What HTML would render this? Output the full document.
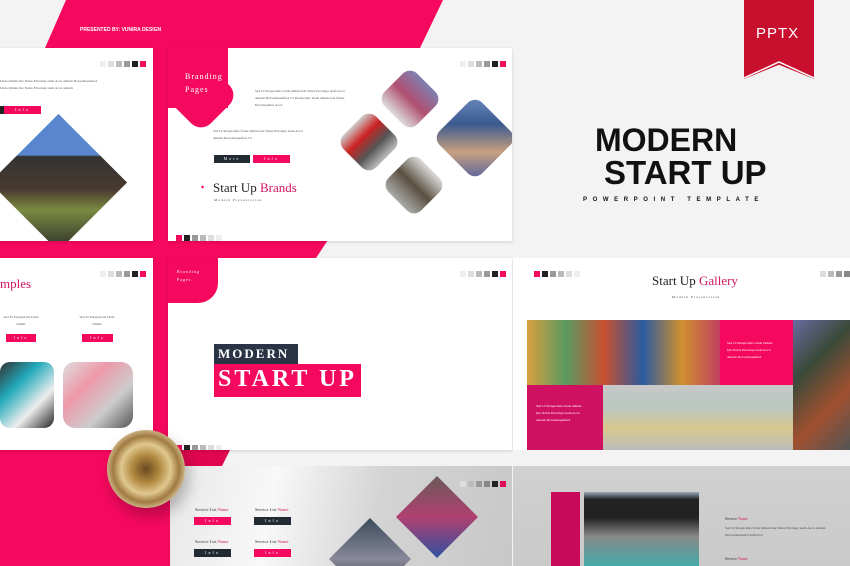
<!DOCTYPE html>
<html><head><meta charset="utf-8"><style>
*{margin:0;padding:0;box-sizing:border-box}
html,body{width:850px;height:566px;overflow:hidden}
body{background:#f3f3f3;font-family:"Liberation Serif",serif}
#w{position:relative;width:850px;height:566px;overflow:hidden}
.a{position:absolute}
.pk{background:#f5095e}
.sl{background:#fff;position:absolute;box-shadow:0 1px 3px rgba(0,0,0,.15);overflow:hidden}
.sw{white-space:nowrap}
.sw span{display:inline-block;width:6px;height:6px;margin-right:2px}
.btn{position:absolute;height:8px;font-size:4px;color:#fff;text-align:center;line-height:8px;letter-spacing:2px}
.tx{position:absolute;font-size:3.5px;color:#555;line-height:7px;white-space:nowrap}
.dia{position:absolute;transform:rotate(45deg);border-radius:10px;overflow:hidden}
</style></head><body><div id="w">
<svg class="a" style="left:0;top:0;display:block" width="850" height="566">
<polygon points="66,0 443,0 420,48 45,48" fill="#f5095e"/>
<polygon points="0,240 328,240 316,258 0,258" fill="#f5095e"/>
<rect x="153" y="40" width="15" height="420" fill="#f5095e"/>
<rect x="0" y="450" width="170" height="116" fill="#f5095e"/>
<polygon points="170,450 230,450 222,466 170,466" fill="#e0064f"/>
</svg>
<div class="a" style="left:80px;top:27px;font:bold 5px 'Liberation Sans',sans-serif;color:#fff">PRESENTED BY: VUNIRA DESIGN</div>

<div class="sl" style="left:0;top:48px;width:153px;height:193px">
<div class="a sw" style="left:100px;top:6px"><span style="background:#eee"></span><span style="background:#ddd"></span><span style="background:#bbb"></span><span style="background:#999"></span><span style="background:#222"></span><span style="background:#f5095e"></span></div>
<div class="tx" style="left:0;top:30px">Unde Omnis Iste Natus Envolupt atem Accu antium Doloremqueifsol<br>Unde Omnis Iste Natus Envolupt atem Accu antium</div>
<div class="btn" style="left:0;top:58px;width:4px;background:#222"></div>
<div class="btn pk" style="left:4px;top:58px;width:37px">Info</div>
<div class="dia" style="left:10px;top:86px;width:97px;height:97px;border-radius:0;background:linear-gradient(135deg,#5a86d0 0%,#5a86d0 30%,#333 31%,#4a3a30 55%,#7a8a40 70%,#2b2b2b 100%)"></div>
</div>
<div class="sl" style="left:168px;top:48px;width:344px;height:193px">
<div class="a sw" style="left:292px;top:6px"><span style="background:#eee"></span><span style="background:#ddd"></span><span style="background:#bbb"></span><span style="background:#999"></span><span style="background:#222"></span><span style="background:#f5095e"></span></div>
<div class="a pk" style="left:0;top:0;width:60px;height:60px"></div>
<div class="a pk" style="left:6px;top:20px;width:54px;height:54px;transform:rotate(45deg);border-radius:14px"></div>
<div class="a" style="left:17px;top:22px;font-size:8px;color:#fff;letter-spacing:1px;line-height:13px">Branding<br>Pages</div>
<div class="tx" style="left:87px;top:40px">Sed Ut Perspiciatis Unde Omnis Iste Natus Envolupt atem Accu<br>antium Doloremqueifsol Ut Perspiciatis Unde Omnis Iste Natus<br>Envolupamus Accu</div>
<div class="tx" style="left:45px;top:80px">Sed Ut Perspiciatis Unde Omnis Iste Natus Envolupt atem Accu<br>antium Doloremqueifsol Ut</div>
<div class="btn" style="left:46px;top:107px;width:36px;background:#222a36">More</div>
<div class="btn pk" style="left:85px;top:107px;width:37px">Info</div>
<div class="a" style="left:33px;top:136px;font-size:4px;color:#f5095e">◆</div>
<div class="a" style="left:45px;top:132px;font-size:13px;color:#222">Start Up <span style="color:#d0155f">Brands</span></div>
<div class="a" style="left:46px;top:150px;font-size:3.5px;letter-spacing:1px;color:#444">Modern Presentation</div>
<div class="a sw" style="left:8px;top:180px"><span style="background:#f5095e"></span><span style="background:#222"></span><span style="background:#999"></span><span style="background:#bbb"></span><span style="background:#ddd"></span><span style="background:#eee"></span></div>
<div class="dia" style="left:219px;top:28px;width:46px;height:46px;background:linear-gradient(#8080b0,#b05070,#ddd)"></div>
<div class="dia" style="left:178px;top:71px;width:46px;height:46px;background:linear-gradient(90deg,#ccc,#c22,#555,#bbb)"></div>
<div class="dia" style="left:223px;top:114px;width:46px;height:46px;background:linear-gradient(#ddd,#5a5040,#aaa)"></div>
<div class="dia" style="left:277px;top:60px;width:60px;height:60px;background:linear-gradient(135deg,#6a8ac0,#3a5a90,#c8a080,#5060a0)"></div>
</div>
<div class="sl" style="left:0;top:258px;width:153px;height:192px">
<div class="a sw" style="left:100px;top:6px"><span style="background:#eee"></span><span style="background:#ddd"></span><span style="background:#bbb"></span><span style="background:#999"></span><span style="background:#222"></span><span style="background:#f5095e"></span></div>
<div class="a" style="left:0;top:18px;font-size:13px;color:#d0155f">mples</div>
<div class="tx" style="left:0;top:56px;text-align:center;width:42px">Sed Ut Perspiciatis Unde<br>Omnis</div>
<div class="tx" style="left:74px;top:56px;text-align:center;width:46px">Sed Ut Perspiciatis Unde<br>Omnis</div>
<div class="btn pk" style="left:6px;top:76px;width:30px">Info</div>
<div class="btn pk" style="left:82px;top:76px;width:31px">Info</div>
<div class="a" style="left:0;top:104px;width:54px;height:66px;border-radius:10px;background:linear-gradient(135deg,#333,#2ab,#eee,#222)"></div>
<div class="a" style="left:63px;top:104px;width:70px;height:66px;border-radius:12px;background:linear-gradient(135deg,#ddd,#e9a,#ccc,#555)"></div>
</div>
<div class="sl" style="left:168px;top:258px;width:344px;height:192px">
<div class="a sw" style="left:292px;top:6px"><span style="background:#eee"></span><span style="background:#ddd"></span><span style="background:#bbb"></span><span style="background:#999"></span><span style="background:#222"></span><span style="background:#f5095e"></span></div>
<div class="a pk" style="left:0;top:0;width:50px;height:45px;border-radius:0 0 20px 0"></div>
<div class="a" style="left:9px;top:10px;font-size:4px;color:#fff;letter-spacing:1px;line-height:8px">Branding<br>Pages</div>
<div class="a" style="left:46px;top:86px;width:84px;height:20px;background:#2b3444;color:#fff;font:bold 13px 'Liberation Serif',serif;letter-spacing:2px;padding:2px 4px">MODERN</div>
<div class="a pk" style="left:46px;top:106px;width:147px;height:33px;color:#fff;font:bold 24px 'Liberation Serif',serif;letter-spacing:3px;padding:2px 4px;white-space:nowrap">START UP</div>
<div class="a sw" style="left:8px;top:180px"><span style="background:#f5095e"></span><span style="background:#222"></span><span style="background:#999"></span><span style="background:#bbb"></span><span style="background:#ddd"></span><span style="background:#eee"></span></div>
</div>
<div class="a" style="left:513px;top:258px;width:337px;height:192px;background:#fff"></div>
<div class="a sw" style="left:534px;top:264px"><span style="background:#f5095e"></span><span style="background:#222"></span><span style="background:#999"></span><span style="background:#bbb"></span><span style="background:#ddd"></span><span style="background:#eee"></span></div>
<div class="a sw" style="left:820px;top:264px"><span style="background:#ddd"></span><span style="background:#bbb"></span><span style="background:#999"></span><span style="background:#888"></span></div>
<div class="a" style="left:652px;top:273px;font-size:13px;color:#222">Start Up <span style="color:#d0155f">Gallery</span></div>
<div class="a" style="left:672px;top:295px;font-size:3.5px;letter-spacing:1px;color:#444">Modern Presentation</div>
<div class="a" style="left:527px;top:320px;width:193px;height:65px;background:linear-gradient(90deg,#d8a040,#5a9a60,#c85030,#2a5aa0,#d09030,#c04060)"></div>
<div class="a pk" style="left:720px;top:320px;width:73px;height:65px"></div>
<div class="tx" style="left:727px;top:340px;color:#fff">Sed Ut Perspiciatis Unde Omnis<br>Iste Natus Envolupt atem Accu<br>antium Doloremqueifsol</div>
<div class="a" style="left:793px;top:320px;width:57px;height:130px;background:linear-gradient(135deg,#6a6aa0,#3a4a3a,#a05030,#555)"></div>
<div class="a" style="left:527px;top:385px;width:76px;height:65px;background:#d01060"></div>
<div class="tx" style="left:536px;top:403px;color:#fff">Sed Ut Perspiciatis Unde Omnis<br>Iste Natus Envolupt atem Accu<br>antium Doloremqueifsol</div>
<div class="a" style="left:603px;top:385px;width:190px;height:65px;background:linear-gradient(180deg,#c8c8c8,#b8c8c0,#d8c890,#bbb)"></div>
<div class="a" style="left:170px;top:466px;width:342px;height:100px;overflow:hidden;background:linear-gradient(100deg,#e8e8e8 0%,#f8f8f8 30%,#d4d4d4 60%,#c8c8c8 100%)">
<div class="a" style="left:238px;top:22px;width:58px;height:58px;transform:rotate(45deg);background:linear-gradient(135deg,#6a5a5a,#b04070,#3050a0)"></div>
<div class="a" style="left:171px;top:64px;width:58px;height:58px;transform:rotate(45deg);background:linear-gradient(135deg,#3a4a5a,#889,#223)"></div>
</div>
<div class="a" style="left:513px;top:466px;width:337px;height:100px;background:linear-gradient(180deg,#d0d0d0,#cacaca)"></div>
<div class="a sw" style="left:460px;top:474px"><span style="background:#ddd"></span><span style="background:#bbb"></span><span style="background:#999"></span><span style="background:#888"></span><span style="background:#222"></span><span style="background:#e00a5a"></span></div>
<div class="a" style="left:195px;top:507px;font-size:4.5px;color:#333">Service List <span style="color:#d0155f">Name</span></div>
<div class="a" style="left:255px;top:507px;font-size:4.5px;color:#333">Service List <span style="color:#d0155f">Name</span></div>
<div class="btn pk" style="left:194px;top:517px;width:37px">Info</div>
<div class="btn" style="left:254px;top:517px;width:37px;background:#222a36">Info</div>
<div class="a" style="left:195px;top:539px;font-size:4.5px;color:#333">Service List <span style="color:#d0155f">Name</span></div>
<div class="a" style="left:255px;top:539px;font-size:4.5px;color:#333">Service List <span style="color:#d0155f">Name</span></div>
<div class="btn" style="left:194px;top:549px;width:37px;background:#222a36">Info</div>
<div class="btn pk" style="left:254px;top:549px;width:37px">Info</div>
<div class="a" style="left:551px;top:492px;width:29px;height:74px;background:#c80a58"></div>
<div class="a" style="left:584px;top:492px;width:115px;height:74px;background:linear-gradient(180deg,#9ab 0%,#222 10%,#222 35%,#888 60%,#4aa 100%)"></div>
<div class="a" style="left:725px;top:516px;font-size:4px;color:#333">Service <span style="color:#d0155f">Name</span></div>
<div class="tx" style="left:725px;top:525px;color:#444">Sed Ut Perspiciatis Unde Omnis Iste Natus Envolupt atem Accu antium<br>Doloremqueifsol Utifed Ut</div>
<div class="a" style="left:725px;top:556px;font-size:4px;line-height:6px;color:#333">Service <span style="color:#d0155f">Name</span></div>
<div class="a" style="left:107px;top:430px;width:78px;height:78px;border-radius:50%;background:radial-gradient(circle,#6a4a20 0%,#b08840 25%,#e0c890 45%,#a07a40 60%,#dccaa0 75%,#b89868 100%);box-shadow:4px 8px 14px rgba(0,0,0,.25)"></div>
<div class="a" style="left:744px;top:0;width:70px;height:79px;background:#c8102e;clip-path:polygon(0 0,100% 0,100% 100%,50% 82%,0 100%)"></div>
<svg class="a" style="left:744px;top:60px" width="70" height="20"><polyline points="0,18 35,2 70,18" fill="none" stroke="#fff" stroke-width="1.5"/></svg>
<div class="a" style="left:756px;top:25px;font:15px 'Liberation Sans',sans-serif;color:#fff;letter-spacing:1px">PPTX</div>
<div class="a" style="left:595px;top:124px;font:bold 32px 'Liberation Sans',sans-serif;color:#111;line-height:32px">MODERN</div>
<div class="a" style="left:604px;top:156px;font:bold 33px 'Liberation Sans',sans-serif;color:#111;line-height:33px;white-space:nowrap">START UP</div>
<div class="a" style="left:583px;top:197px;font:bold 6px 'Liberation Sans',sans-serif;color:#111;letter-spacing:5.6px;white-space:nowrap">POWERPOINT TEMPLATE</div>
</div></body></html>
